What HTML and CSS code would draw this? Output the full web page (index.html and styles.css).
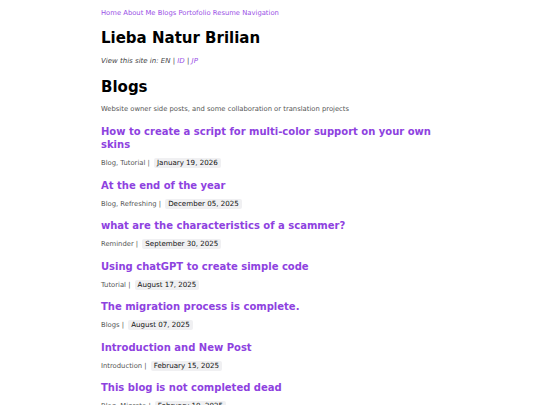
FILE: index.html
```html
<!DOCTYPE html>
<html lang="en">
<head>
<meta charset="utf-8">
<title>Blogs - Lieba Natur Brilian</title>
<link rel="stylesheet" href="styles.css">
</head>
<body>
<div class="page">
  <nav class="nav">
    <a href="#">Home</a> <a href="#">About Me</a> <a href="#">Blogs</a> <a href="#">Portofolio</a> <a href="#">Resume</a> <a href="#">Navigation</a>
  </nav>
  <h1 class="site-title">Lieba Natur Brilian</h1>
  <p class="lang">View this site in: EN | <a href="#">ID</a> | <a href="#">JP</a></p>
  <h2 class="section-title">Blogs</h2>
  <p class="desc">Website owner side posts, and some collaboration or translation projects</p>
  <ul class="posts">
    <li class="post">
      <a class="post-title" href="#">How to create a script for multi-color support on your own skins</a>
      <div class="meta">Blog, Tutorial | <span class="date">January 19, 2026</span></div>
    </li>
    <li class="post">
      <a class="post-title" href="#">At the end of the year</a>
      <div class="meta">Blog, Refreshing | <span class="date">December 05, 2025</span></div>
    </li>
    <li class="post">
      <a class="post-title" href="#">what are the characteristics of a scammer?</a>
      <div class="meta">Reminder | <span class="date">September 30, 2025</span></div>
    </li>
    <li class="post">
      <a class="post-title" href="#">Using chatGPT to create simple code</a>
      <div class="meta">Tutorial | <span class="date">August 17, 2025</span></div>
    </li>
    <li class="post">
      <a class="post-title" href="#">The migration process is complete.</a>
      <div class="meta">Blogs | <span class="date">August 07, 2025</span></div>
    </li>
    <li class="post">
      <a class="post-title" href="#">Introduction and New Post</a>
      <div class="meta">Introduction | <span class="date">February 15, 2025</span></div>
    </li>
    <li class="post">
      <a class="post-title" href="#">This blog is not completed dead</a>
      <div class="meta">Blog, Migrate | <span class="date">February 10, 2025</span></div>
    </li>
  </ul>
</div>
</body>
</html>
```

FILE: styles.css
```css
html, body {
  margin: 0;
  padding: 0;
  background: #ffffff;
}
body {
  font-family: "DejaVu Sans", Verdana, sans-serif;
  color: #111111;
}
.page {
  width: 338px;
  margin: 0 auto;
  padding-top: 8px;
}
.nav {
  font-size: 6.8px;
  line-height: 10px;
}
.nav a {
  color: #9a4fe6;
  text-decoration: none;
}
.site-title {
  font-size: 15px;
  line-height: 20px;
  font-weight: bold;
  margin: 10px 0 0;
  color: #000;
}
.lang {
  font-size: 7px;
  font-style: italic;
  color: #444;
  margin: 8px 0 0;
  line-height: 10px;
}
.lang a {
  color: #9a4fe6;
  text-decoration: none;
}
.section-title {
  font-size: 15px;
  line-height: 20px;
  font-weight: bold;
  margin: 11px 0 0;
  color: #000;
}
.desc {
  font-size: 6.8px;
  color: #555;
  margin: 7px 0 0;
  line-height: 10px;
}
.posts {
  list-style: none;
  margin: 11px 0 0;
  padding: 0;
}
.post {
  margin: 0 0 10.5px;
}
.post-title {
  display: block;
  font-size: 10px;
  line-height: 13px;
  font-weight: bold;
  color: #8e42df;
  text-decoration: none;
}
.meta {
  font-size: 6.8px;
  line-height: 10px;
  color: #555;
  margin-top: 7px;
}
.date {
  display: inline-block;
  background: #f0f0f2;
  color: #111;
  font-size: 7.1px;
  padding: 0 3px;
  margin-left: 2px;
  border-radius: 2px;
  line-height: 10px;
}
```
